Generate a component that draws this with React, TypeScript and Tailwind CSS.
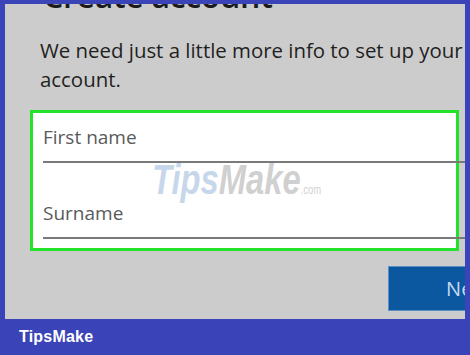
import React from 'react';

const font = { fontFamily: '"Open Sans", "Noto Sans", sans-serif' };

export default function App() {
  return (
    <div className="w-[470px] h-[355px] bg-[#3b43b9] flex flex-col overflow-hidden" style={font}>
      {/* Screen capture */}
      <div className="relative mt-[4px] ml-[5px] mr-[5px] h-[315px] bg-[#cccccc] overflow-hidden">
        <h1 className="pl-[38px] -mt-[29px] text-[32px] leading-[42px] font-semibold text-[#1b1b1b] tracking-[-0.3px]">
          Create account
        </h1>

        <p className="pl-[35px] mt-[19px] text-[20.4px] leading-[29px] text-[#1f1f1f] whitespace-nowrap">
          We need just a little more info to set up your
          <br />
          account.
        </p>

        {/* Highlighted fields */}
        <div className="ml-[25px] mr-[6px] mt-[16px] border-[3px] border-[#22e22a] bg-white pb-[9px]">
          <div className="ml-[10px] -mr-[12px] pt-[12px] pb-[12px] border-b-2 border-[#7a7a7a]">
            <span className="block text-[19px] leading-[24px] text-[#5a5a5a]">First name</span>
          </div>
          <div className="ml-[10px] -mr-[12px] pt-[38px] pb-[12px] border-b-2 border-[#7a7a7a]">
            <span className="block text-[19px] leading-[24px] text-[#5a5a5a]">Surname</span>
          </div>
        </div>

        <div className="flex justify-end mt-[15px] -mr-[60px]">
          <button className="h-[45px] pl-[57px] pr-[34px] bg-[#0b58a0] border border-[#5a8fc8] text-[20px] text-[#c3daf2] text-left">
            Next
          </button>
        </div>

        {/* Watermark */}
        <div
          className="absolute left-[147px] top-[155px] flex items-baseline italic font-bold select-none scale-x-[0.78] origin-left"
          style={{ fontFamily: '"Liberation Sans", Arial, sans-serif' }}
        >
          <span className="text-[42px] leading-none text-[#b8cde6]/80">Tips</span>
          <span className="text-[42px] leading-none text-[#c4c4c4]/80">Make</span>
          <span className="text-[12px] leading-none text-[#c4c4c4]/80 not-italic font-normal">.com</span>
        </div>
      </div>

      {/* Footer bar */}
      <div className="flex-1 flex items-center pl-[19px] pb-[1px]">
        <span className="text-white font-bold text-[16px] tracking-[0.2px]" style={{ fontFamily: '"Liberation Sans", Arial, sans-serif' }}>
          TipsMake
        </span>
      </div>
    </div>
  );
}
